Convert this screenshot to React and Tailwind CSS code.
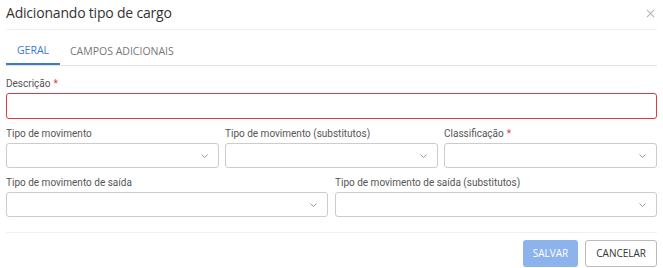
import React from 'react';

const font = {fontFamily: '"Open Sans", "Noto Sans", sans-serif'};
const labelFont = {fontFamily: 'Roboto, "Open Sans", sans-serif'};

function Chevron() {
  return (
    <svg className="w-[7px] h-[4px]" viewBox="0 0 7 4" fill="none" stroke="#9a9a9a" strokeWidth="1">
      <path d="M0.5 0.5l3 3 3-3" />
    </svg>
  );
}

function Label({children, required}) {
  return (
    <div className="h-[14px] mb-[2px] text-[10px] leading-[14px] text-[#555]" style={labelFont}>
      {children}
      {required && <span className="text-[#e0393e] ml-[3px]">*</span>}
    </div>
  );
}

function Select({label, required}) {
  return (
    <div className="flex-1 min-w-0">
      <Label required={required}>{label}</Label>
      <div className="h-[25px] border border-[#cccccc] rounded-[3px] flex items-center justify-end pr-[10px]">
        <Chevron />
      </div>
    </div>
  );
}

export default function App() {
  return (
    <div className="w-[663px] h-[268px] bg-white overflow-hidden" style={font}>
      {/* header */}
      <div className="h-[30px] mx-[6px] pb-[5px] flex items-center justify-between border-b border-[#f0f0f0]">
        <span className="text-[14px] text-[#333] tracking-[-0.2px]">Adicionando tipo de cargo</span>
        <svg className="w-[9px] h-[9px] mr-[2px] mt-[3px]" viewBox="0 0 10 10" stroke="#b5b5b5" strokeWidth="1.2">
          <path d="M1 1l8 8M9 1l-8 8" />
        </svg>
      </div>

      {/* tabs */}
      <div className="mx-[6px] mt-[8px] flex border-b border-[#e2e2e2] text-[10.5px]">
        <div className="w-[54px] h-[27px] flex items-center justify-center text-[#3b78db] border-b-2 border-[#3b78db] -mb-px">
          GERAL
        </div>
        <div className="h-[27px] flex items-center px-[10px] text-[#777]">CAMPOS ADICIONAIS</div>
      </div>

      {/* form */}
      <div className="px-[6px] pt-[11px]">
        <Label required>Descrição</Label>
        <div className="h-[26px] border border-[#e0393e] rounded-[3px]" />

        <div className="flex gap-[6px] mt-[8px]">
          <Select label="Tipo de movimento" />
          <Select label="Tipo de movimento (substitutos)" />
          <Select label="Classificação" required />
        </div>

        <div className="flex gap-[7px] mt-[8px]">
          <Select label="Tipo de movimento de saída" />
          <Select label="Tipo de movimento de saída (substitutos)" />
        </div>

        <div className="mt-[15px] border-t border-[#f0f0f0] pt-[7px] flex justify-end gap-[7px]">
          <button className="h-[27px] px-[10px] rounded-[3px] bg-[#8db3ec] text-white text-[10px]">SALVAR</button>
          <button className="h-[27px] px-[10px] rounded-[3px] border border-[#bbbbbb] text-[#333] text-[10px]">CANCELAR</button>
        </div>
      </div>
    </div>
  );
}
